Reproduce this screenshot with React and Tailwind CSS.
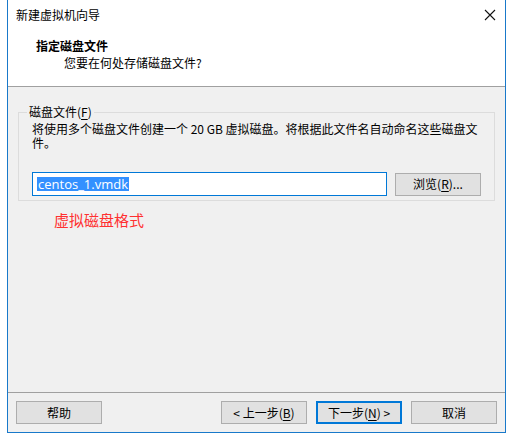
import React from "react";

const ui = { fontFamily: '"Noto Sans CJK SC", "Noto Sans", sans-serif' };

const Key = ({ children }) => <span className="underline underline-offset-2">{children}</span>;

const WinButton = ({ children, className = "", primary = false }) => (
  <button
    className={`h-[23px] flex items-center justify-center text-[12px] text-black bg-[#e1e1e1] ${
      primary ? "border-2 border-[#0078d7]" : "border border-[#adadad]"
    } ${className}`}
  >
    {children}
  </button>
);

export default function App() {
  return (
    <div className="w-[513px] h-[440px] bg-white" style={ui}>
      <div className="ml-[7px] w-[499px] h-[433px] border-x border-b border-[#1979ca] flex flex-col bg-[#f0f0f0]">
        {/* title bar + wizard header */}
        <div className="bg-white h-[87px] border-b border-[#a0a0a0] flex flex-col">
          <div className="h-[30px] flex items-center justify-between pl-[8px] pr-[8px]">
            <span className="text-[12px] text-black">新建虚拟机向导</span>
            <svg width="12" height="12" viewBox="0 0 12 12" className="mr-[1px]">
              <path d="M1 1L11 11M11 1L1 11" stroke="#111" strokeWidth="1.1" />
            </svg>
          </div>
          <div className="pl-[28px] pt-[8px] text-[12px] font-bold text-black leading-[16px]">指定磁盘文件</div>
          <div className="pl-[56px] pt-[1px] text-[12px] text-black leading-[16px]">您要在何处存储磁盘文件?</div>
        </div>

        {/* body */}
        <div className="flex-1 px-[10px] pt-[17px]">
          <fieldset className="border border-[#dcdcdc] px-[13px] pb-[11px] pt-0 h-[97px]">
            <legend className="px-[2px] -ml-[5px] text-[12px] text-black leading-[16px]">
              磁盘文件(<Key>F</Key>)
            </legend>
            <p className="text-[12px] text-black leading-[14px] mt-[2px]">
              将使用多个磁盘文件创建一个 20 GB 虚拟磁盘。将根据此文件名自动命名这些磁盘文件。
            </p>
            <div className="flex items-center mt-[22px] gap-[8px]">
              <div className="w-[355px] h-[24px] border border-[#0078d7] bg-white flex items-center pl-[4px]">
                <span className="bg-[#3390ff] text-white text-[13px] leading-[14px] px-[1px]" style={{ fontFamily: '"Open Sans", "Noto Sans", sans-serif' }}>
                  centos_1.vmdk
                </span>
              </div>
              <WinButton className="w-[86px] h-[22px]">
                浏览(<Key>R</Key>)...
              </WinButton>
            </div>
          </fieldset>
          <div className="pl-[36px] pt-[9px] text-[15px] text-[#ff3030] leading-[20px]">虚拟磁盘格式</div>
        </div>

        {/* footer */}
        <div className="h-[40px] border-t border-[#a0a0a0] flex items-start pt-[8px] px-[8px]">
          <WinButton className="w-[86px]">帮助</WinButton>
          <div className="flex-1" />
          <WinButton className="w-[86px]">&lt; 上一步(<Key>B</Key>)</WinButton>
          <WinButton primary className="w-[86px] ml-[9px]">下一步(<Key>N</Key>) &gt;</WinButton>
          <WinButton className="w-[86px] ml-[9px]">取消</WinButton>
        </div>
      </div>
    </div>
  );
}
